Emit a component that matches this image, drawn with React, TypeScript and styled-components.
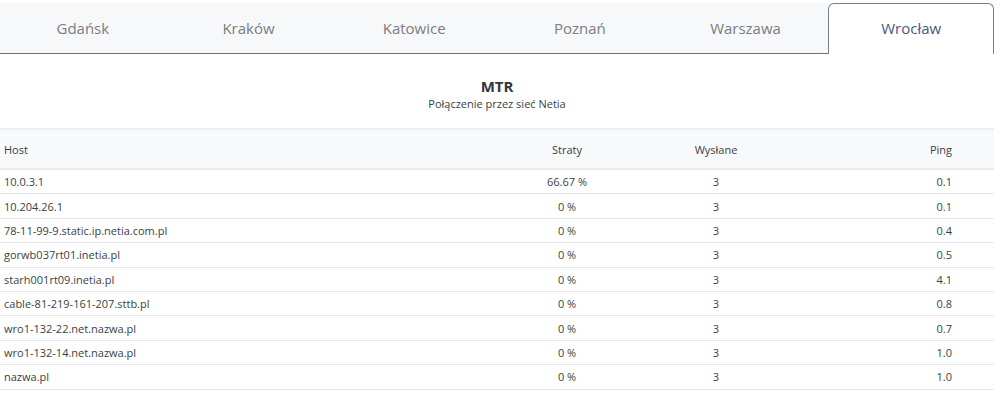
import React, { useState } from 'react';
import styled, { createGlobalStyle } from 'styled-components';

const GlobalStyle = createGlobalStyle`
  body {
    margin: 0;
    background: #ffffff;
    font-family: "Open Sans", "Noto Sans", Arial, sans-serif;
    color: #3a3f45;
  }
`;

const Page = styled.div`
  width: 994px;
  padding-top: 3px;
`;

const TabBar = styled.div`
  display: flex;
  height: 50px;
  background: #f7f8fa;
  border-bottom: 1px solid #6b727c;
`;

const Tab = styled.button<{ $active?: boolean }>`
  flex: 1;
  display: flex;
  align-items: center;
  justify-content: center;
  font-family: inherit;
  font-size: 15px;
  color: ${(p) => (p.$active ? '#4b5684' : '#7a7d82')};
  background: ${(p) => (p.$active ? '#ffffff' : 'transparent')};
  border: ${(p) => (p.$active ? '1px solid #7a8089' : '1px solid transparent')};
  border-bottom: none;
  border-radius: 6px 6px 0 0;
  margin-bottom: -1px;
  padding: 0 0 2px;
  cursor: pointer;
`;

const TitleBlock = styled.div`
  display: flex;
  flex-direction: column;
  align-items: center;
  padding: 22px 0 16px;
`;

const Title = styled.div`
  font-size: 15px;
  font-weight: 700;
  line-height: 20px;
  color: #2f3640;
`;

const Subtitle = styled.div`
  font-size: 11px;
  line-height: 16px;
  color: #3a3f45;
`;

const Table = styled.div`
  display: flex;
  flex-direction: column;
  font-size: 11px;
  color: #3a3f45;
`;

const Row = styled.div<{ $head?: boolean }>`
  display: grid;
  grid-template-columns: 492px 150px 148px 1fr;
  align-items: center;
  height: ${(p) => (p.$head ? '42px' : '24.4px')};
  box-sizing: border-box;
  background: ${(p) => (p.$head ? '#f8f9fa' : '#ffffff')};
  border-top: ${(p) => (p.$head ? '2px solid #eceef0' : 'none')};
  border-bottom: ${(p) => (p.$head ? '2px solid #e8eaec' : '1px solid #e5e7e9')};
`;

const Cell = styled.div<{ $align: 'left' | 'center' | 'right' }>`
  text-align: ${(p) => p.$align};
  padding: ${(p) => (p.$align === 'left' ? '0 0 0 4px' : p.$align === 'right' ? '0 42px 0 0' : '0')};
  white-space: nowrap;
`;

const hops = [
  ['10.0.3.1', '66.67 %', '3', '0.1'],
  ['10.204.26.1', '0 %', '3', '0.1'],
  ['78-11-99-9.static.ip.netia.com.pl', '0 %', '3', '0.4'],
  ['gorwb037rt01.inetia.pl', '0 %', '3', '0.5'],
  ['starh001rt09.inetia.pl', '0 %', '3', '4.1'],
  ['cable-81-219-161-207.sttb.pl', '0 %', '3', '0.8'],
  ['wro1-132-22.net.nazwa.pl', '0 %', '3', '0.7'],
  ['wro1-132-14.net.nazwa.pl', '0 %', '3', '1.0'],
  ['nazwa.pl', '0 %', '3', '1.0'],
];

const cities = ['Gdańsk', 'Kraków', 'Katowice', 'Poznań', 'Warszawa', 'Wrocław'];

const App: React.FC = () => {
  const [active, setActive] = useState('Wrocław');

  return (
    <>
      <GlobalStyle />
      <Page>
        <TabBar>
          {cities.map((c) => (
            <Tab key={c} $active={c === active} onClick={() => setActive(c)}>
              {c}
            </Tab>
          ))}
        </TabBar>

        <TitleBlock>
          <Title>MTR</Title>
          <Subtitle>Połączenie przez sieć Netia</Subtitle>
        </TitleBlock>

        <Table>
          <Row $head>
            <Cell $align="left">Host</Cell>
            <Cell $align="center">Straty</Cell>
            <Cell $align="center">Wysłane</Cell>
            <Cell $align="right">Ping</Cell>
          </Row>
          {hops.map(([host, loss, sent, ping]) => (
            <Row key={host}>
              <Cell $align="left">{host}</Cell>
              <Cell $align="center">{loss}</Cell>
              <Cell $align="center">{sent}</Cell>
              <Cell $align="right">{ping}</Cell>
            </Row>
          ))}
        </Table>
      </Page>
    </>
  );
};

export default App;
